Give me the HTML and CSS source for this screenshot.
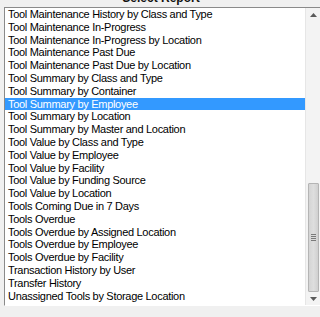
FILE: index.html
```html
<!DOCTYPE html>
<html>
<head>
<meta charset="utf-8">
<link rel="stylesheet" href="styles.css">
</head>
<body>
<div class="dialog">
  <div class="title">Select Report</div>
  <div class="listbox">
    <ul class="items">
      <li>Tool Maintenance History by Class and Type</li>
      <li>Tool Maintenance In-Progress</li>
      <li>Tool Maintenance In-Progress by Location</li>
      <li>Tool Maintenance Past Due</li>
      <li>Tool Maintenance Past Due by Location</li>
      <li>Tool Summary by Class and Type</li>
      <li>Tool Summary by Container</li>
      <li class="selected">Tool Summary by Employee</li>
      <li>Tool Summary by Location</li>
      <li>Tool Summary by Master and Location</li>
      <li>Tool Value by Class and Type</li>
      <li>Tool Value by Employee</li>
      <li>Tool Value by Facility</li>
      <li>Tool Value by Funding Source</li>
      <li>Tool Value by Location</li>
      <li>Tools Coming Due in 7 Days</li>
      <li>Tools Overdue</li>
      <li>Tools Overdue by Assigned Location</li>
      <li>Tools Overdue by Employee</li>
      <li>Tools Overdue by Facility</li>
      <li>Transaction History by User</li>
      <li>Transfer History</li>
      <li>Unassigned Tools by Storage Location</li>
    </ul>
    <div class="scrollbar">
      <div class="btn">
        <svg width="7" height="4" viewBox="0 0 7 4"><path d="M0 4 L3.5 0 L7 4 Z" fill="#5a5a5a"/></svg>
      </div>
      <div class="spacer"></div>
      <div class="thumb">
        <div class="grip"><span></span><span></span><span></span><span></span></div>
      </div>
      <div class="btn">
        <svg width="7" height="4" viewBox="0 0 7 4"><path d="M0 0 L3.5 4 L7 0 Z" fill="#5a5a5a"/></svg>
      </div>
    </div>
  </div>
</div>
</body>
</html>
```

FILE: styles.css
```css
html, body {
  margin: 0;
  padding: 0;
  background: #f0f0f0;
  overflow: hidden;
}
.dialog {
  width: 320px;
  height: 317px;
  overflow: hidden;
  font-family: "Liberation Sans", Arial, sans-serif;
}
.title {
  margin-top: -9px;
  height: 14px;
  line-height: 14px;
  font-size: 12px;
  font-weight: bold;
  text-align: center;
  color: #111;
  padding-left: 2px;
}
.listbox {
  margin-top: 2px;
  margin-left: 4px;
  width: 315px;
  height: 297px;
  display: flex;
  background: #fff;
  border-top: 1px solid #8a8a8a;
  border-left: 1px solid #8a8a8a;
  border-bottom: 1px solid #ffffff;
  border-right: 1px solid #ffffff;
  overflow: hidden;
}
.items {
  list-style: none;
  margin: 0;
  padding: 0;
  flex: 1;
  font-size: 11px;
  letter-spacing: -0.3px;
  color: #000;
}
.items li {
  height: 12.8px;
  line-height: 12.8px;
  padding-left: 3px;
  white-space: nowrap;
}
.items li.selected {
  background: #3399ff;
  color: #fff;
}
.scrollbar {
  width: 14px;
  display: flex;
  flex-direction: column;
  background: #f3f3f3;
  border-left: 1px solid #e6e6e6;
}
.btn {
  height: 13px;
  display: flex;
  align-items: center;
  justify-content: center;
}
.spacer {
  flex: 1;
}
.thumb {
  height: 107px;
  margin: 0 1px 0 2px;
  background: linear-gradient(to right, #d4d4d4, #dedede 50%, #d0d0d0);
  border: 1px solid #b4b4b4;
  border-radius: 1px;
  display: flex;
  align-items: center;
  justify-content: center;
}
.grip {
  display: flex;
  flex-direction: column;
  gap: 1px;
}
.grip span {
  display: block;
  width: 5px;
  height: 1px;
  background: #7a7a7a;
}
```
